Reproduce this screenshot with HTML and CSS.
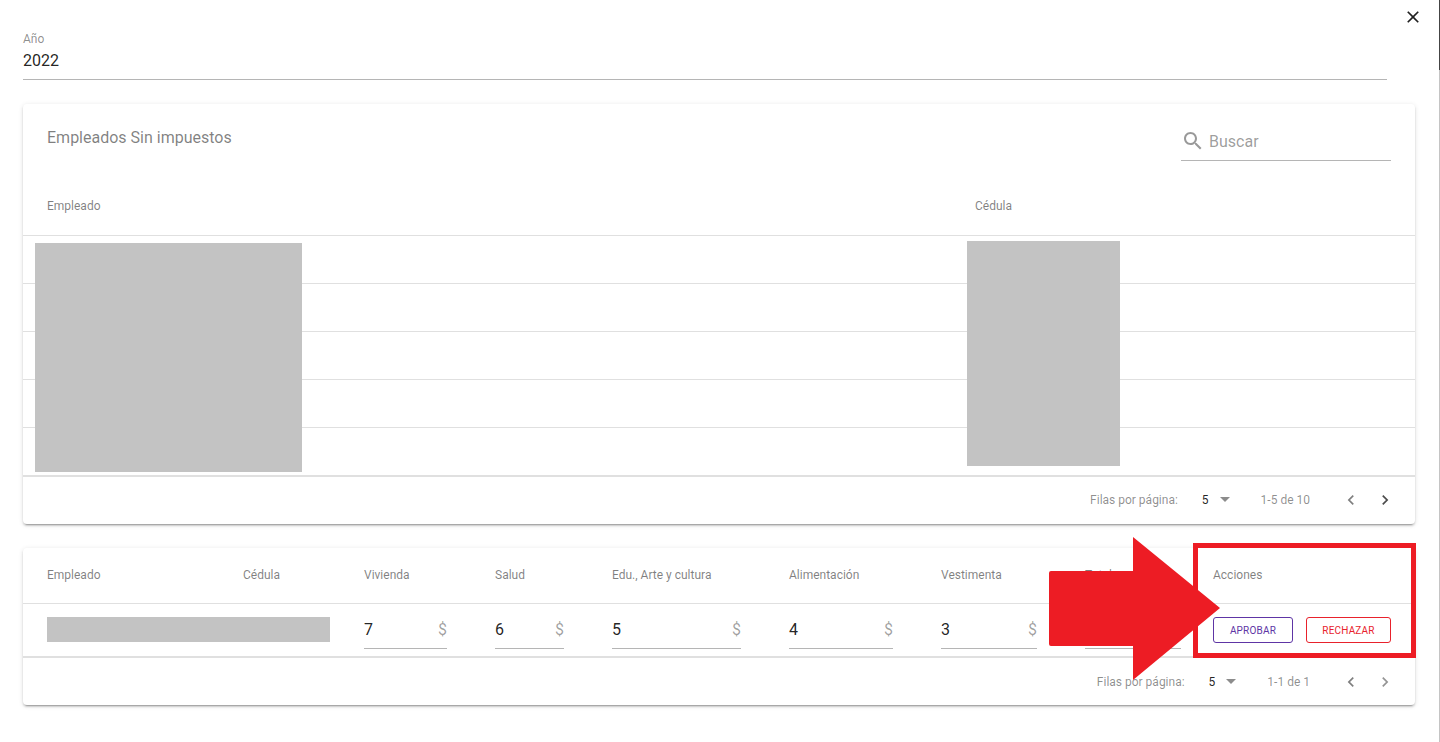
FILE: index.html
```html
<!DOCTYPE html>
<html lang="en">
<head>
    <meta charset="UTF-8">
    <meta name="viewport" content="width=device-width, initial-scale=1.0">
    <title>Empleados Sin impuestos</title>
    <link rel="stylesheet" href="styles.css">
</head>
<body>
    <div class="scrollbar"><div class="scrollbar-thumb"></div></div>

    <button class="close-btn" aria-label="Cerrar">
        <svg viewBox="0 0 24 24" width="20" height="20"><path d="M19 6.41 17.59 5 12 10.59 6.41 5 5 6.41 10.59 12 5 17.59 6.41 19 12 13.41 17.59 19 19 17.59 13.41 12z"/></svg>
    </button>

    <main class="page">
        <div class="year-field">
            <div class="year-label">Año</div>
            <div class="year-value">2022</div>
        </div>

        <!-- First table -->
        <section class="card card-top">
            <div class="toolbar">
                <h2 class="toolbar-title">Empleados Sin impuestos</h2>
                <div class="search">
                    <svg viewBox="0 0 24 24" width="24" height="24"><path d="M15.5 14h-.79l-.28-.27C15.41 12.59 16 11.11 16 9.5 16 5.91 13.09 3 9.5 3S3 5.91 3 9.5 5.91 16 9.5 16c1.61 0 3.09-.59 4.23-1.57l.27.28v.79l5 4.99L20.49 19l-4.99-5zm-6 0C7.01 14 5 11.99 5 9.5S7.01 5 9.5 5 14 7.01 14 9.5 11.99 14 9.5 14z"/></svg>
                    <span class="search-text">Buscar</span>
                </div>
            </div>
            <div class="head-row head-row-top">
                <div>Empleado</div>
                <div>Cédula</div>
            </div>
            <div class="empty-row"></div>
            <div class="empty-row"></div>
            <div class="empty-row"></div>
            <div class="empty-row"></div>
            <div class="empty-row empty-row-last"></div>
            <div class="pagination">
                <span class="rows-label">Filas por página:</span>
                <span class="rows-value">5</span>
                <span class="caret"></span>
                <span class="range">1-5 de 10</span>
                <svg class="chevron" viewBox="0 0 24 24" width="20" height="20"><path d="M15.41 7.41 14 6l-6 6 6 6 1.41-1.41L10.83 12z"/></svg>
                <svg class="chevron" viewBox="0 0 24 24" width="20" height="20"><path d="M10 6 8.59 7.41 13.17 12l-4.58 4.59L10 18l6-6z"/></svg>
            </div>
            <div class="redact redact-name"></div>
            <div class="redact redact-id"></div>
        </section>

        <!-- Second table -->
        <section class="card card-bottom">
            <div class="head-row head-row-bottom">
                <div>Empleado</div>
                <div>Cédula</div>
                <div>Vivienda</div>
                <div>Salud</div>
                <div>Edu., Arte y cultura</div>
                <div>Alimentación</div>
                <div>Vestimenta</div>
                <div>Total</div>
                <div>Acciones</div>
            </div>
            <div class="data-row">
                <div></div>
                <div></div>
                <div class="money w-83"><span>7</span><span class="dollar">$</span></div>
                <div class="money w-69"><span>6</span><span class="dollar">$</span></div>
                <div class="money w-129"><span>5</span><span class="dollar">$</span></div>
                <div class="money w-104"><span>4</span><span class="dollar">$</span></div>
                <div class="money w-96"><span>3</span><span class="dollar">$</span></div>
                <div class="money w-96"><span></span><span class="dollar"></span></div>
                <div class="actions">
                    <button class="action-btn approve">APROBAR</button>
                    <button class="action-btn reject">RECHAZAR</button>
                </div>
            </div>
            <div class="pagination">
                <span class="rows-label">Filas por página:</span>
                <span class="rows-value">5</span>
                <span class="caret"></span>
                <span class="range">1-1 de 1</span>
                <svg class="chevron" viewBox="0 0 24 24" width="20" height="20"><path d="M15.41 7.41 14 6l-6 6 6 6 1.41-1.41L10.83 12z"/></svg>
                <svg class="chevron chevron-off" viewBox="0 0 24 24" width="20" height="20"><path d="M10 6 8.59 7.41 13.17 12l-4.58 4.59L10 18l6-6z"/></svg>
            </div>
            <div class="redact redact-row"></div>
        </section>
    </main>

    <!-- Annotation drawn over the screenshot -->
    <div class="mark-box"></div>
    <svg class="mark-arrow" viewBox="0 0 172 144" width="172" height="144"><path d="M84 0 171 71 84 143V109H2a2 2 0 0 1-2-2V36a2 2 0 0 1 2-2H84z"/></svg>
</body>
</html>
```

FILE: styles.css
```css
* {
    box-sizing: border-box;
}

html, body {
    height: 100%;
}

body {
    margin: 0;
    background-color: #ffffff;
    color: rgba(0, 0, 0, 0.87);
    font-family: Roboto, 'Liberation Sans', sans-serif;
    overflow: hidden;
    position: relative;
}

.page {
    padding: 29px 25px 0 23px;
}

/* Year field */
.year-field {
    width: 1364px;
    height: 51px;
    border-bottom: 1px solid #b5b5b5;
}

.year-label {
    font-size: 12px;
    line-height: 20px;
    color: rgba(0, 0, 0, 0.45);
}

.year-value {
    font-size: 16px;
    line-height: 24px;
}

/* Cards */
.card {
    position: relative;
    background-color: #ffffff;
    border-radius: 4px;
    box-shadow: 0 3px 1px -2px rgba(0, 0, 0, 0.2), 0 2px 2px rgba(0, 0, 0, 0.14), 0 1px 5px rgba(0, 0, 0, 0.12);
}

.card-top {
    margin-top: 24px;
    height: 420px;
}

.card-bottom {
    margin-top: 24px;
    height: 157px;
}

.toolbar {
    height: 72px;
    padding: 22px 24px 0;
    display: flex;
    justify-content: space-between;
    align-items: flex-start;
}

.toolbar-title {
    margin: 0;
    font-size: 16px;
    font-weight: 400;
    line-height: 24px;
    color: rgba(0, 0, 0, 0.5);
}

.search {
    width: 210px;
    height: 36px;
    margin-top: -1px;
    padding-bottom: 3px;
    display: flex;
    align-items: center;
    gap: 4px;
    border-bottom: 1px solid #b5b5b5;
    color: rgba(0, 0, 0, 0.4);
}

.search svg {
    fill: rgba(0, 0, 0, 0.4);
    flex-shrink: 0;
}

.search-text {
    font-size: 16px;
}

/* Table rows */
.head-row {
    display: grid;
    align-items: center;
    padding: 0 24px;
    font-size: 12px;
    font-weight: 400;
    color: rgba(0, 0, 0, 0.5);
    border-bottom: 1px solid #e0e0e0;
}

.head-row-top {
    height: 60px;
    grid-template-columns: 928px 1fr;
}

.head-row-bottom {
    height: 56px;
    padding-bottom: 2px;
    grid-template-columns: 196px 121px 131px 117px 177px 152px 144px 128px 1fr;
}

.empty-row {
    height: 48px;
    border-bottom: 1px solid #e0e0e0;
}

.empty-row-last {
    border-bottom-width: 2px;
    height: 49px;
}

.data-row {
    height: 54px;
    padding: 0 24px;
    display: grid;
    grid-template-columns: 196px 121px 131px 117px 177px 152px 144px 128px 1fr;
    align-items: start;
    border-bottom: 2px solid #e0e0e0;
}

.money {
    height: 35px;
    margin-top: 10px;
    padding-bottom: 4px;
    display: flex;
    justify-content: space-between;
    align-items: center;
    font-size: 16px;
    border-bottom: 1px solid #b5b5b5;
}

.w-69 { width: 69px; }
.w-83 { width: 83px; }
.w-96 { width: 96px; }
.w-104 { width: 104px; }
.w-129 { width: 129px; }

.dollar {
    color: rgba(0, 0, 0, 0.38);
}

.actions {
    margin-top: 13px;
    display: flex;
    gap: 13px;
}

.action-btn {
    height: 26px;
    padding: 0;
    background: transparent;
    border: 1px solid;
    border-radius: 3px;
    font-family: inherit;
    font-size: 10px;
    font-weight: 400;
    letter-spacing: 0.2px;
}

.approve {
    width: 80px;
    color: #5e35a5;
    border-color: #5e35a5;
}

.reject {
    width: 85px;
    color: #e8222c;
    border-color: #e8222c;
}

/* Pagination */
.pagination {
    height: 47px;
    display: flex;
    justify-content: flex-end;
    align-items: center;
    padding-right: 20px;
    font-size: 12px;
    color: rgba(0, 0, 0, 0.45);
}

.card-top .pagination {
    padding-bottom: 2px;
}

.rows-value {
    margin-left: 24px;
    color: rgba(0, 0, 0, 0.87);
}

.caret {
    width: 0;
    height: 0;
    margin-left: 11px;
    border-left: 5px solid transparent;
    border-right: 5px solid transparent;
    border-top: 5px solid rgba(0, 0, 0, 0.45);
}

.range {
    margin-left: 31px;
    margin-right: 19px;
}

.chevron {
    fill: rgba(0, 0, 0, 0.5);
    margin-left: 12px;
}

.chevron + .chevron {
    margin-left: 14px;
    fill: rgba(0, 0, 0, 0.7);
}

.chevron + .chevron-off {
    fill: rgba(0, 0, 0, 0.42);
}

/* Redacted blocks */
.redact {
    position: absolute;
    background-color: #c3c3c3;
}

.redact-name {
    left: 12px;
    top: 139px;
    width: 267px;
    height: 229px;
}

.redact-id {
    left: 944px;
    top: 137px;
    width: 153px;
    height: 225px;
}

.redact-row {
    left: 24px;
    top: 69px;
    width: 283px;
    height: 25px;
}

/* Close button and scrollbar */
.close-btn {
    position: absolute;
    top: 7px;
    right: 17px;
    width: 20px;
    height: 20px;
    padding: 0;
    background: transparent;
    border: none;
}

.close-btn svg {
    display: block;
    fill: rgba(0, 0, 0, 0.87);
}

.scrollbar {
    position: absolute;
    top: 0;
    right: 0;
    width: 1px;
    height: 100%;
    background-color: #c4c4c4;
}

.scrollbar-thumb {
    height: 70px;
    width: 1px;
    background-color: #444444;
}

/* Red annotation */
.mark-box {
    position: absolute;
    left: 1193px;
    top: 543px;
    width: 223px;
    height: 115px;
    border: 5px solid #ed1c24;
}

.mark-arrow {
    position: absolute;
    left: 1049px;
    top: 537px;
    fill: #ed1c24;
}
```
